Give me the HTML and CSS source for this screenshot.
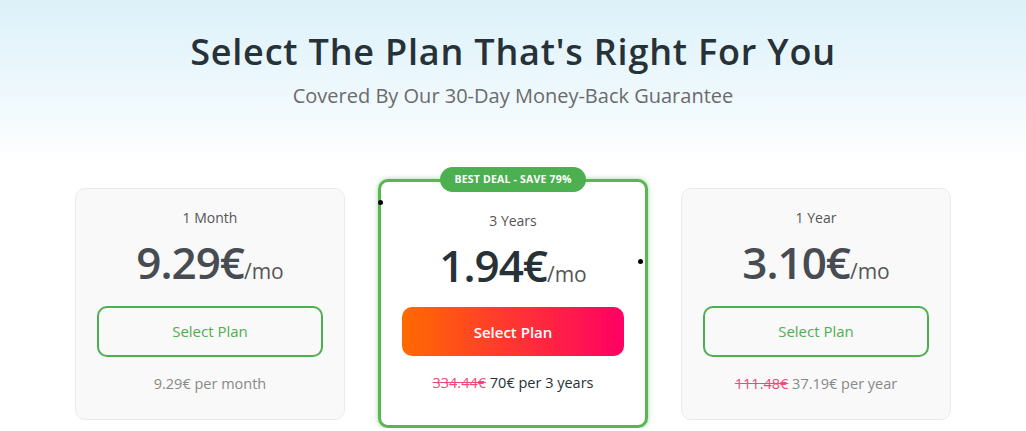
FILE: index.html
```html
<!DOCTYPE html>
<html lang="en">
<head>
  <meta charset="UTF-8">
  <meta name="viewport" content="width=device-width, initial-scale=1.0">
  <title>Select The Plan</title>
  <link rel="stylesheet" href="styles.css">
</head>
<body>

  <!-- Cabecera -->
  <header class="hero">
    <h1>Select The Plan That's Right For You</h1>
    <p class="subtitle">Covered By Our 30-Day Money-Back Guarantee</p>
  </header>

  <div class="plans">
    <div class="plan">
      <div class="term">1 Month</div>
      <div class="price">9.29€<span class="per">/mo</span></div>
      <button class="btn">Select Plan</button>
      <div class="total">9.29€ per month</div>
    </div>

    <div class="plan plan-best">
      <span class="badge">Best Deal - Save 79%</span>
      <span class="dot dot-left"></span>
      <span class="dot dot-right"></span>
      <div class="term">3 Years</div>
      <div class="price">1.94€<span class="per">/mo</span></div>
      <button class="btn btn-hot">Select Plan</button>
      <div class="total"><s>334.44€</s> 70€ per 3 years</div>
    </div>

    <div class="plan">
      <div class="term">1 Year</div>
      <div class="price">3.10€<span class="per">/mo</span></div>
      <button class="btn">Select Plan</button>
      <div class="total"><s>111.48€</s> 37.19€ per year</div>
    </div>
  </div>

</body>
</html>
```

FILE: styles.css
```css
body {
  font-family: "Open Sans", Arial, sans-serif;
  margin: 0;
  background: #fff;
  color: #263238;
}
.hero {
  text-align: center;
  padding: 30px 0 51px;
  background: linear-gradient(#dcf1f9, #f2fafd 70%, #fff);
}
.hero h1 {
  margin: 0;
  font-size: 36px;
  line-height: 44px;
  font-weight: 600;
  letter-spacing: 0.8px;
  color: #263238;
}
.subtitle {
  margin: 9px 0 0;
  font-size: 20px;
  line-height: 26px;
  color: #6b6b6b;
}
.plans {
  display: flex;
  justify-content: center;
  align-items: center;
  gap: 33px;
  padding-top: 19px;
}
.plan {
  position: relative;
  width: 270px;
  box-sizing: border-box;
  padding: 19px 21px 25px;
  background: #f9f9f9;
  border: 1px solid #ebebeb;
  border-radius: 10px;
  text-align: center;
}
.term {
  font-size: 14px;
  line-height: 20px;
  color: #555;
}
.price {
  margin-top: 8px;
  font-size: 44px;
  line-height: 52px;
  font-weight: 600;
  color: #474c52;
  letter-spacing: -1px;
}
.per {
  font-size: 21px;
  line-height: 1;
  font-weight: 400;
  letter-spacing: 0;
  color: #555;
}
.btn {
  display: block;
  width: 100%;
  height: 51px;
  margin-top: 18px;
  font-family: inherit;
  font-size: 15px;
  color: #4caf50;
  background: transparent;
  border: 2px solid #4caf50;
  border-radius: 10px;
  cursor: pointer;
}
.total {
  margin-top: 17px;
  font-size: 14.5px;
  line-height: 20px;
  color: #888;
}
.total s {
  color: #ec4a7a;
}
.plan-best {
  background: #fff;
  border: 3px solid #58b84f;
  box-shadow: 0 0 5px rgba(76, 175, 80, 0.55);
  padding: 29px 21px 32px;
}
.plan-best .price {
  color: #263238;
}
.plan-best .btn-hot {
  height: 49px;
  margin-top: 16px;
  color: #fff;
  border: none;
  font-weight: 600;
  background: linear-gradient(90deg, #ff6a00, #ff0064);
}
.plan-best .total {
  color: #263238;
}
.badge {
  position: absolute;
  top: -15px;
  left: 50%;
  transform: translateX(-50%);
  width: 146px;
  height: 25px;
  line-height: 25px;
  border-radius: 13px;
  background: #4caf50;
  color: #fff;
  font-size: 10.5px;
  font-weight: 700;
  letter-spacing: 0.2px;
  text-transform: uppercase;
  white-space: nowrap;
}
.dot {
  position: absolute;
  width: 5px;
  height: 5px;
  border-radius: 50%;
  background: #000;
}
.dot-left {
  left: -3px;
  top: 18px;
}
.dot-right {
  right: 2px;
  top: 77px;
}
```
